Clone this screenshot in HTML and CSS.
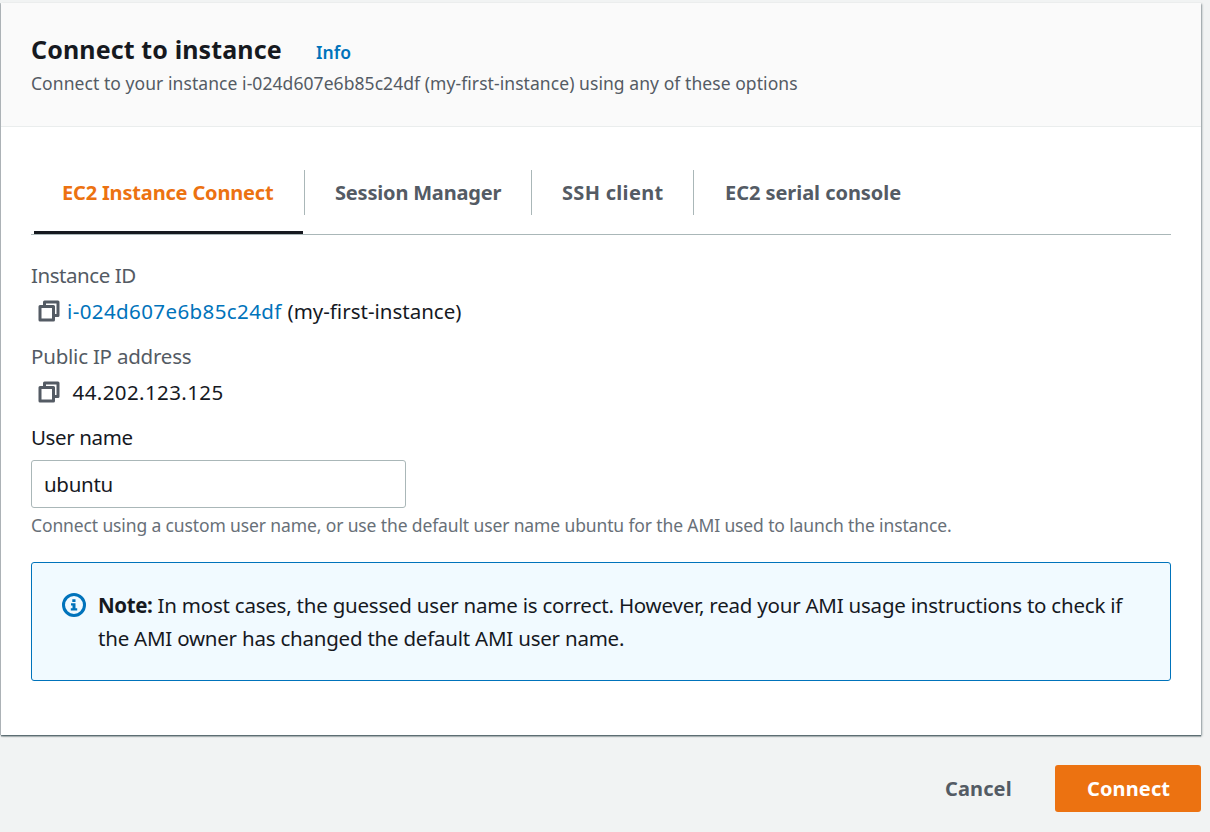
FILE: index.html
```html
<!DOCTYPE html>
<html lang="en">
<head>
<meta charset="utf-8">
<title>Connect to instance</title>
<link rel="stylesheet" href="styles.css">
</head>
<body>
<main class="panel">
  <header class="panel-header">
    <div class="title-row"><h1 class="title">Connect to instance</h1><a class="info">Info</a></div>
    <p class="subtitle"><span class="t-sub">Connect to your instance i-024d607e6b85c24df (my-first-instance) using any of these options</span></p>
  </header>
  <section class="panel-body">
    <nav class="tabs">
      <a class="tab tab-active">EC2 Instance Connect</a>
      <a class="tab tab-session">Session Manager</a>
      <a class="tab tab-ssh">SSH client</a>
      <a class="tab tab-serial">EC2 serial console</a>
    </nav>
    <div class="field">
      <div class="label label-id">Instance ID</div>
      <div class="value">
        <svg class="copy" viewBox="0 0 22 22"><path d="M6.500 5V2h13.500v13.500H17M2 6.500h13.500v13.500H2z"/></svg>
        <span class="link">i-024d607e6b85c24df</span><span class="name">(my-first-instance)</span>
      </div>
    </div>
    <div class="field">
      <div class="label">Public IP address</div>
      <div class="value">
        <svg class="copy" viewBox="0 0 22 22"><path d="M6.500 5V2h13.500v13.500H17M2 6.500h13.500v13.500H2z"/></svg>
        <span class="ip">44.202.123.125</span>
      </div>
    </div>
    <div class="user">
      <div class="label label-dark">User name</div>
      <div class="input">ubuntu</div>
      <div class="hint">Connect using a custom user name, or use the default user name ubuntu for the AMI used to launch the instance.</div>
    </div>
    <aside class="note">
      <svg class="note-icon" viewBox="0 0 24 24"><circle cx="12" cy="12" r="10.500"/><path d="M10.300 6.300h3.200v2.600h-3.200zM9 10.300h4.500v5h1.700V17.500H8.800v-2.200h1.700v-2.800H9z"/></svg>
      <p class="note-text"><b class="note-lead">Note:</b> In most cases, the guessed user name is correct. However, read your AMI usage instructions to check if<br>the AMI owner has changed the default AMI user name.</p>
    </aside>
  </section>
</main>
<footer class="actions">
  <a class="cancel">Cancel</a>
  <a class="connect">Connect</a>
</footer>
</body>
</html>
```
FILE: styles.css
```css
* { box-sizing: border-box; }
body { margin: 0; background: #f1f3f3; color: #16191f; font: 20.5px/33px "Noto Sans", sans-serif; white-space: nowrap; overflow: hidden; }
h1, p { margin: 0; }
.panel { margin: 3px 9px 0 1px; height: 732px; background: #fff; box-shadow: 0 1px 1px 0 rgba(0, 28, 36, .4), 1px 1px 2px 0 rgba(0, 28, 36, .35), 0 2px 1px 0 rgba(0, 28, 36, .15), -1px 0 0 0 #c3c8cb; }
.panel-header { height: 124px; padding: 28px 30px 0; background: #fafafa; border-bottom: 1px solid #eaeded; }
.title-row { display: flex; align-items: baseline; height: 37px; }
.title { width: 285px; font-size: 25px; line-height: 36px; font-weight: 700; letter-spacing: .12px; }
.info { color: #0073bb; font-size: 17.5px; font-weight: 600; }
.subtitle { color: #545b64; font-size: 17.5px; line-height: 31px; letter-spacing: .065px; }
.panel-body { padding: 41px 30px 0; }
.tabs { display: flex; height: 67px; padding-top: 2px; border-bottom: 1px solid #aab7b8; color: #545b64; font-weight: 700; font-size: 20px; line-height: 45px; }
.tab { height: 45px; padding-left: 30px; border-right: 1px solid #aab7b8; }
.tab-active { width: 274px; padding-left: 31px; color: #ec7211; position: relative; letter-spacing: -.17px; }
.tab-active::after { content: ""; position: absolute; left: 3px; top: 61px; width: 269px; height: 3px; background: #16191f; }
.tab-session { width: 227px; letter-spacing: -.19px; }
.tab-ssh { width: 162px; letter-spacing: .3px; }
.tab-serial { border: 0; padding-left: 31px; letter-spacing: -.05px; }
.field { height: 81px; }
.tabs + .field { margin-top: 24px; }
.label { height: 33px; color: #545b64; letter-spacing: -.22px; }
.label-id { letter-spacing: -.45px; }
.label-dark { color: #16191f; letter-spacing: -.38px; }
.value { display: flex; align-items: center; height: 38px; padding-left: 7px; }
.copy { width: 22px; height: 22px; margin-right: 7px; fill: none; stroke: #545b64; stroke-width: 3; stroke-linejoin: round; }
.link { width: 220px; color: #0073bb; letter-spacing: .4px; }
.name { padding-left: .5px; }
.ip { padding-left: 5.5px; letter-spacing: .4px; }
.input { width: 375px; height: 48px; margin-top: 6px; padding-left: 12px; border: 1px solid #aab7b8; border-radius: 3px; line-height: 47px; letter-spacing: -.3px; }
.hint { height: 35px; color: #687078; font-size: 17.5px; line-height: 35px; letter-spacing: -.127px; }
.note { display: flex; height: 119px; margin-top: 19px; padding: 26px 30px 0; border: 1px solid #0073bb; border-radius: 3px; background: #f1faff; }
.note-icon { width: 24px; height: 24px; margin: 4px 12px 0 0; flex: none; fill: none; stroke: #0073bb; stroke-width: 3; }
.note-icon path { fill: #0073bb; stroke: none; }
.note-text { letter-spacing: -.222px; }
.note-lead { letter-spacing: -.4px; }
.actions { display: flex; justify-content: flex-end; padding: 30px 9px 0 0; font-weight: 700; font-size: 20px; line-height: 47px; letter-spacing: .12px; }
.cancel { width: 110px; color: #545b64; }
.connect { width: 146px; height: 47px; padding-left: 32px; border-radius: 3px; background: #ec7211; color: #fff; }
```
